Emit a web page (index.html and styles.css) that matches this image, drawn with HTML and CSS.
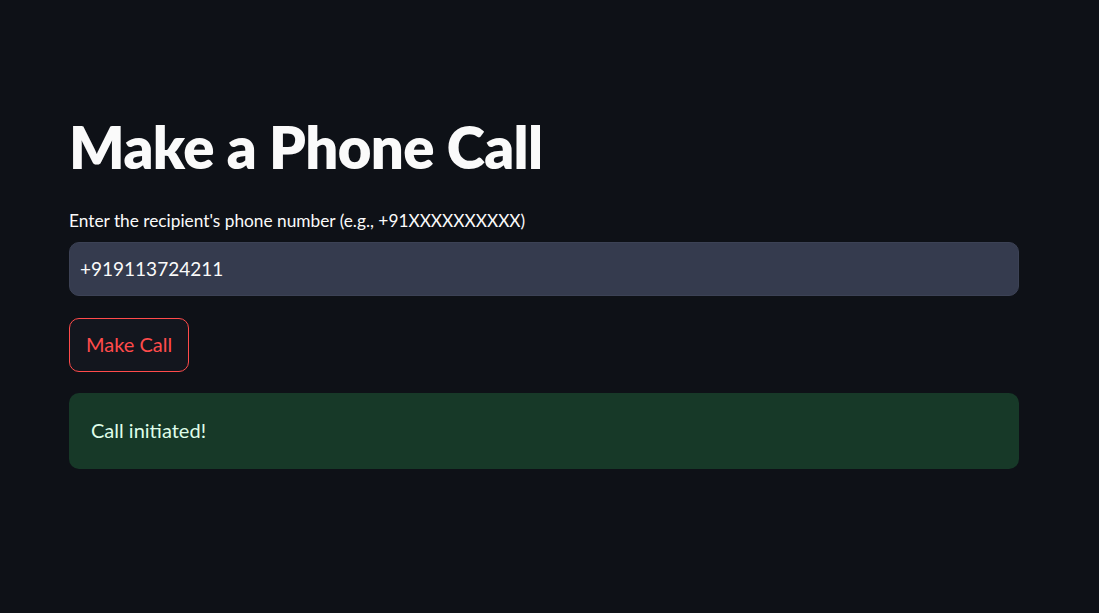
FILE: index.html
```html
<!DOCTYPE html>
<html>
<head>
<meta charset="utf-8">
<link rel="stylesheet" href="styles.css">
</head>
<body>
<main class="main">
  <h1 class="title">Make a Phone Call</h1>
  <label class="label" for="phone">Enter the recipient's phone number (e.g., +91XXXXXXXXXX)</label>
  <div class="input-wrap"><input id="phone" class="input" type="text" value="+919113724211"></div>
  <button class="btn">Make Call</button>
  <div class="alert">Call initiated!</div>
</main>
</body>
</html>
```
FILE: styles.css
```css
html, body {
  margin: 0;
  padding: 0;
  background: #0e1117;
  height: 100%;
}
body {
  font-family: "Lato", "Liberation Sans", sans-serif;
  color: #fafafa;
}
.main {
  width: 950px;
  margin: 0 0 0 69px;
  padding-top: 111px;
  display: flex;
  flex-direction: column;
  align-items: flex-start;
}
.title {
  margin: 0;
  font-size: 58px;
  font-weight: 800;
  line-height: 72px;
  letter-spacing: -0.6px;
}
.label {
  margin-top: 26px;
  font-size: 17.3px;
  line-height: 24px;
}
.input-wrap {
  margin-top: 9px;
  width: 100%;
}
.input {
  box-sizing: border-box;
  width: 100%;
  height: 54px;
  background: #353b4e;
  border: 1px solid #3c4255;
  border-radius: 10px;
  color: #fafafa;
  font-family: inherit;
  font-size: 19px;
  padding: 0 10px 2px;
  outline: none;
}
.btn {
  margin-top: 22px;
  height: 54px;
  padding: 0 16px 2px;
  border-radius: 10px;
  border: 1px solid #ff4b4b;
  background: #13161e;
  color: #ff4b4b;
  font-family: inherit;
  font-size: 20px;
}
.alert {
  box-sizing: border-box;
  margin-top: 21px;
  width: 100%;
  height: 76px;
  padding: 0 22px 2px;
  display: flex;
  align-items: center;
  background: #173928;
  border-radius: 10px;
  color: #dffde9;
  font-size: 20px;
}
```
